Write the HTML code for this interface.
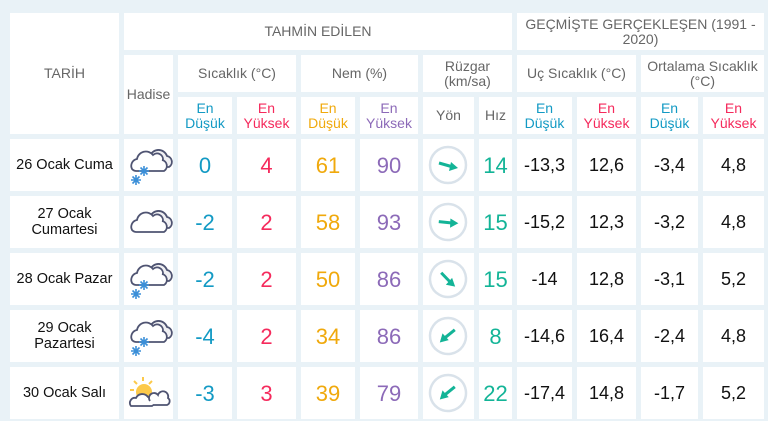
<!DOCTYPE html>
<html><head><meta charset="utf-8"><style>
body{margin:0;width:768px;height:421px;background:#e9f2f7;font-family:"Liberation Sans",sans-serif;overflow:hidden;position:relative}
.g{position:absolute;left:10px;top:13px;display:grid;grid-template-columns:109px 49px 54px 59px 54px 58px 51px 33px 55px 59px 57px 61px;grid-template-rows:37px 37px 37px 52px 52px 52px 52px 52px;gap:5px}
.g>div{background:#fff;display:flex;align-items:center;justify-content:center;text-align:center;color:#666;font-size:14px;line-height:15px}
.b{color:#139ac4!important}.p{color:#f52a5c!important}.o{color:#f0a90c!important}.v{color:#8c6ab8!important}.t{color:#13b497!important}
.n{font-size:22px!important}
.k{color:#111!important;font-size:18px!important}
.d{color:#111!important;font-size:14.5px!important;line-height:16px!important}
</style></head><body>
<svg width="0" height="0" style="position:absolute">
<defs>
<g id="cl"><path d="M6 25 a7 7 0 0 1 5-10 a9 9 0 0 1 16-4 a6 6 0 0 1 10 5 h-1 a6 6 0 0 1 2 11 h-27 a6 6 0 0 1 -5-2z" fill="#fff" stroke="#4f5472" stroke-width="1.8"/></g>
<g id="cl2"><path d="M24 12 a9 9 0 0 1 17 0 a6 6 0 0 1 2 11 h-6" fill="#f0f0f3" stroke="#4f5472" stroke-width="1.8"/></g>
<g id="sf" stroke="#3b8fd8" stroke-width="1.6"><path d="M-5 0h10M0-5v10M-3.5-3.5l7 7M-3.5 3.5l7-7"/></g>
<g id="ar"><circle cx="0" cy="0" r="18" fill="none" stroke="#d9e2ea" stroke-width="2.5"/><path d="M-9 -2 L5 2" stroke="#13b497" stroke-width="3"/><path d="M3-3 L10 3 L1 6z" fill="#13b497"/></g>
</defs></svg>
<div class="g">
<div style="grid-row:1/4">TARİH</div>
<div style="grid-column:2/9">TAHMİN EDİLEN</div>
<div style="grid-column:9/13">GEÇMİŞTE GERÇEKLEŞEN (1991 -<br>2020)</div>
<div style="grid-row:2/4">Hadise</div>
<div style="grid-column:3/5">Sıcaklık (°C)</div>
<div style="grid-column:5/7">Nem (%)</div>
<div style="grid-column:7/9">Rüzgar<br>(km/sa)</div>
<div style="grid-column:9/11">Uç Sıcaklık (°C)</div>
<div style="grid-column:11/13">Ortalama Sıcaklık<br>(°C)</div>
<div class="b">En<br>Düşük</div><div class="p">En<br>Yüksek</div><div class="o">En<br>Düşük</div><div class="v">En<br>Yüksek</div><div>Yön</div><div>Hız</div><div class="b">En<br>Düşük</div><div class="p">En<br>Yüksek</div><div class="b">En<br>Düşük</div><div class="p">En<br>Yüksek</div>

<div class="d">26 Ocak Cuma</div>
<div><svg width="49" height="52"><g transform="translate(2,5)"><use href="#cl2"/><use href="#cl"/><use href="#sf" x="18" y="27"/><use href="#sf" x="10" y="36"/></g></svg></div>
<div class="b n">0</div><div class="p n">4</div><div class="o n">61</div><div class="v n">90</div>
<div><svg width="51" height="52"><g transform="translate(25,26) rotate(0)"><use href="#ar"/></g></svg></div>
<div class="t n">14</div><div class="k">-13,3</div><div class="k">12,6</div><div class="k">-3,4</div><div class="k">4,8</div>

<div class="d">27 Ocak<br>Cumartesi</div>
<div><svg width="49" height="52"><g transform="translate(2,9)"><use href="#cl2"/><use href="#cl"/></g></svg></div>
<div class="b n">-2</div><div class="p n">2</div><div class="o n">58</div><div class="v n">93</div>
<div><svg width="51" height="52"><g transform="translate(25,26) rotate(-10)"><use href="#ar"/></g></svg></div>
<div class="t n">15</div><div class="k">-15,2</div><div class="k">12,3</div><div class="k">-3,2</div><div class="k">4,8</div>

<div class="d">28 Ocak Pazar</div>
<div><svg width="49" height="52"><g transform="translate(2,5)"><use href="#cl2"/><use href="#cl"/><use href="#sf" x="18" y="27"/><use href="#sf" x="10" y="36"/></g></svg></div>
<div class="b n">-2</div><div class="p n">2</div><div class="o n">50</div><div class="v n">86</div>
<div><svg width="51" height="52"><g transform="translate(25,26) rotate(30)"><use href="#ar"/></g></svg></div>
<div class="t n">15</div><div class="k">-14</div><div class="k">12,8</div><div class="k">-3,1</div><div class="k">5,2</div>

<div class="d">29 Ocak<br>Pazartesi</div>
<div><svg width="49" height="52"><g transform="translate(2,5)"><use href="#cl2"/><use href="#cl"/><use href="#sf" x="18" y="27"/><use href="#sf" x="10" y="36"/></g></svg></div>
<div class="b n">-4</div><div class="p n">2</div><div class="o n">34</div><div class="v n">86</div>
<div><svg width="51" height="52"><g transform="translate(25,26) rotate(125)"><use href="#ar"/></g></svg></div>
<div class="t n">8</div><div class="k">-14,6</div><div class="k">16,4</div><div class="k">-2,4</div><div class="k">4,8</div>

<div class="d">30 Ocak Salı</div>
<div><svg width="49" height="52"><g transform="translate(2,6)"><g stroke="#fcc94a" stroke-width="2"><path d="M17 4v4M8 8l3 3M4 17h4M26 8l-3 3"/></g><circle cx="18" cy="19" r="8" fill="#fcc94a"/><path d="M5 33 a5 5 0 0 1 5-8 a7 7 0 0 1 12-1 a5 5 0 0 1 4 9z" fill="#fff" stroke="#4f5472" stroke-width="1.8"/><path d="M24 28 a5 5 0 0 1 8-6 a5 5 0 0 1 10 3 a4 4 0 0 1 -1 7 h-14" fill="#fff" stroke="#4f5472" stroke-width="1.8"/></g></svg></div>
<div class="b n">-3</div><div class="p n">3</div><div class="o n">39</div><div class="v n">79</div>
<div><svg width="51" height="52"><g transform="translate(25,26) rotate(125)"><use href="#ar"/></g></svg></div>
<div class="t n">22</div><div class="k">-17,4</div><div class="k">14,8</div><div class="k">-1,7</div><div class="k">5,2</div>
</div>
</body></html>
